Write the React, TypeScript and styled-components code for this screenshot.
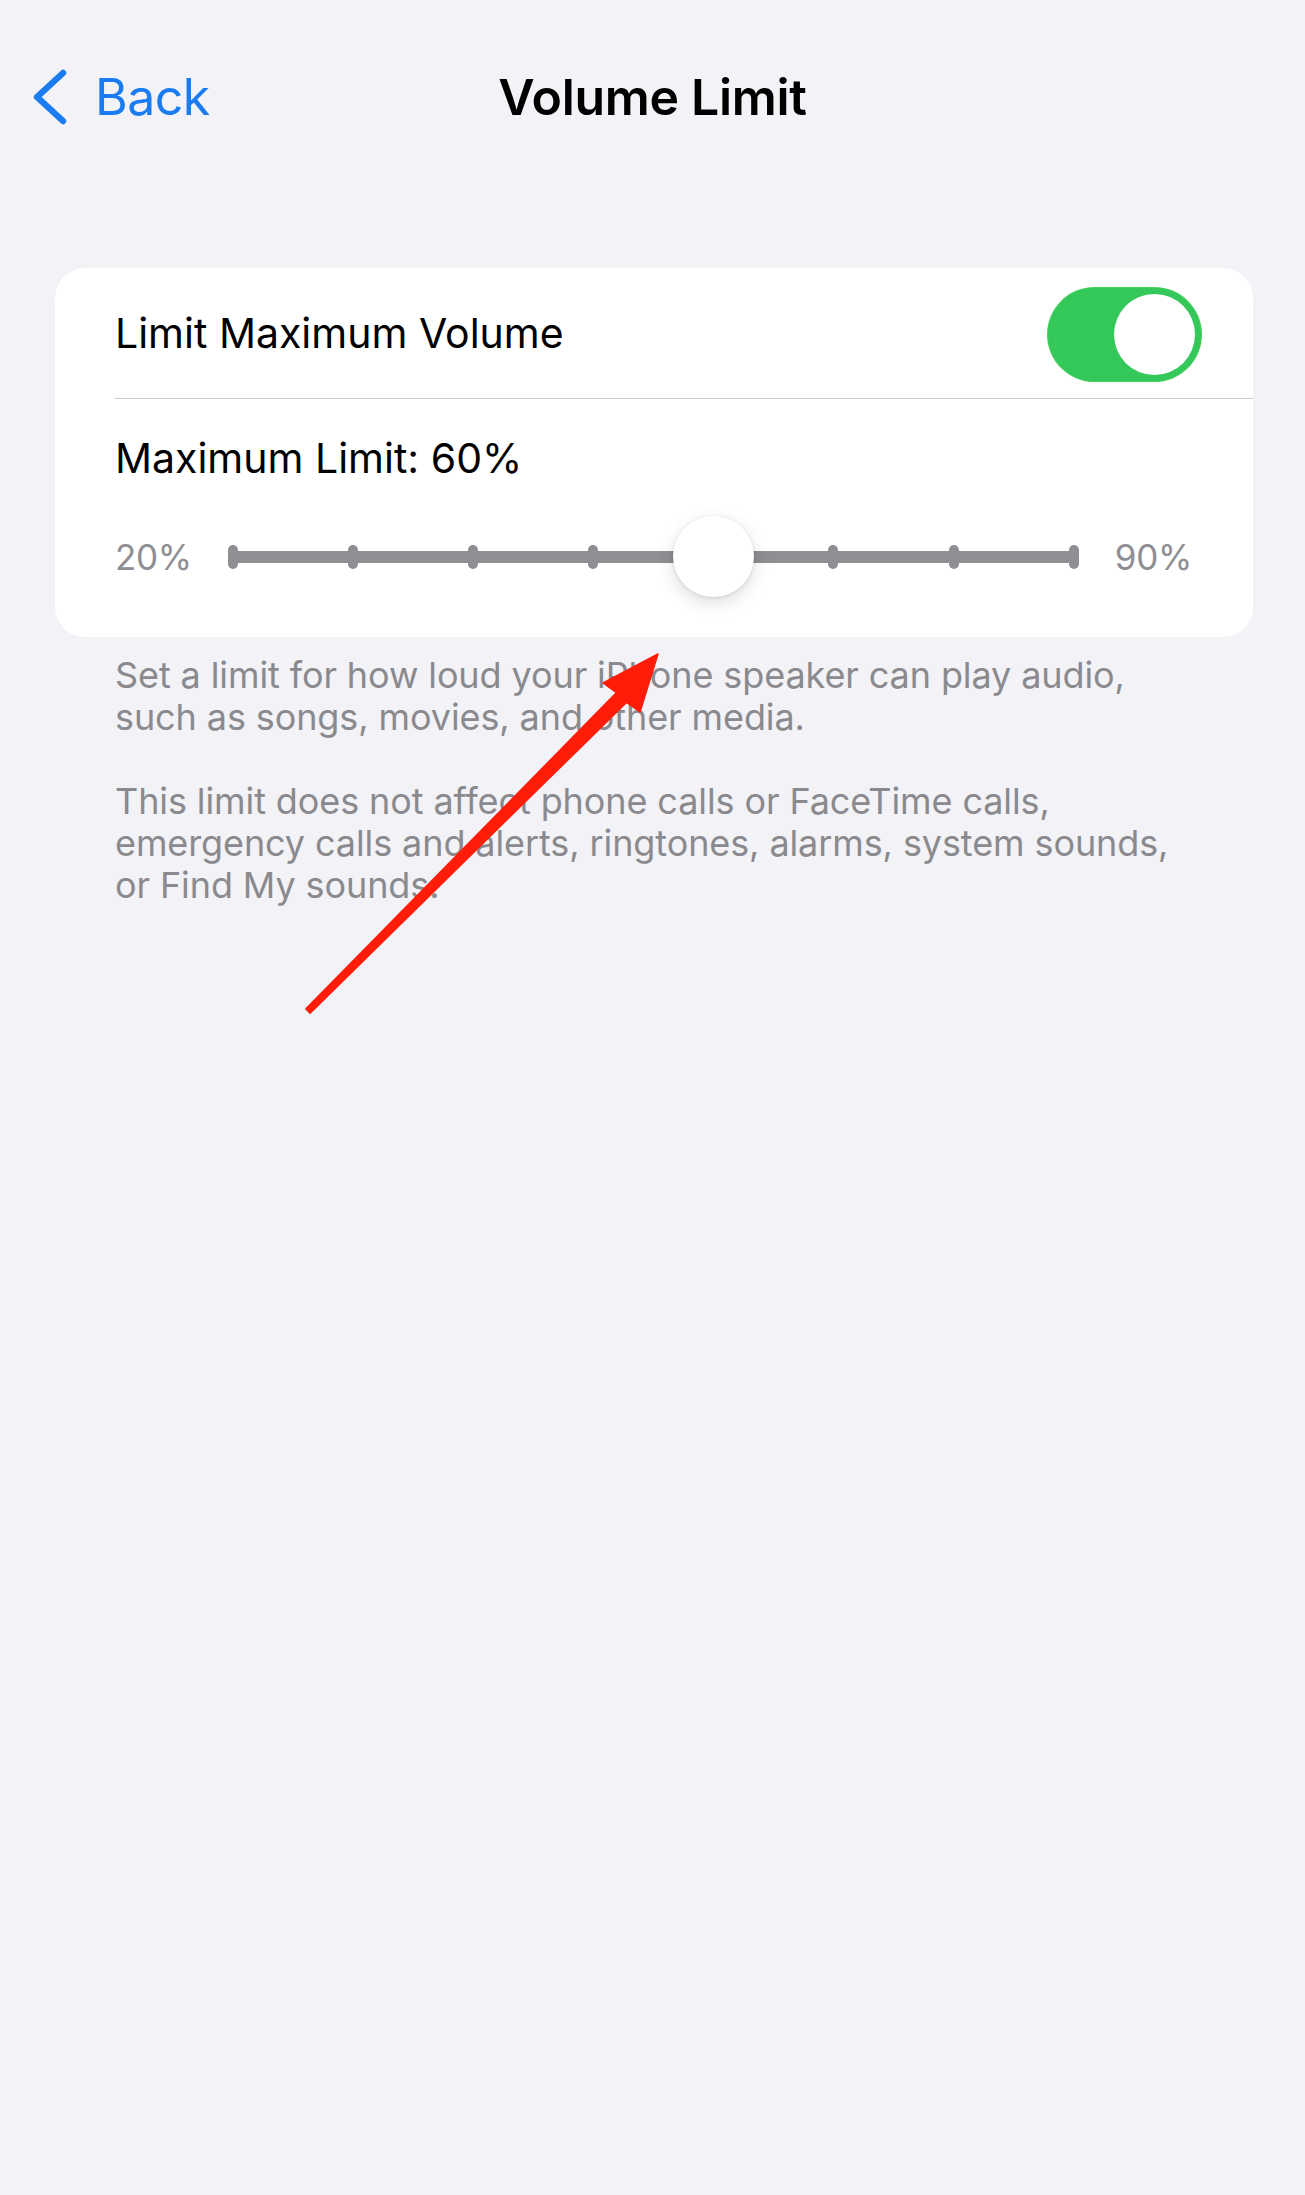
import React from 'react';
import styled, { createGlobalStyle } from 'styled-components';

const GlobalStyle = createGlobalStyle`
  html, body {
    margin: 0;
    padding: 0;
    background: #f2f2f7;
  }
  body {
    font-family: Inter, "Noto Sans", "Liberation Sans", sans-serif;
    -webkit-font-smoothing: antialiased;
  }
`;

const Page = styled.div`
  position: relative;
  min-height: 2195px;
  background: #f2f2f7;
  overflow: hidden;
`;

const NavBar = styled.header`
  display: grid;
  grid-template-columns: 1fr auto 1fr;
  align-items: center;
  height: 74px;
  margin-top: 60px;
  padding: 0 33px;
`;

const BackButton = styled.button`
  display: flex;
  align-items: center;
  gap: 28px;
  justify-self: start;
  border: 0;
  background: none;
  padding: 0;
  color: #1a7cf0;
  font-family: inherit;
  font-size: 50px;
  font-weight: 400;
  letter-spacing: -0.5px;
  cursor: pointer;
`;

const Title = styled.h1`
  margin: 0;
  font-size: 50px;
  font-weight: 600;
  color: #000;
  letter-spacing: -0.3px;
`;

const Card = styled.section`
  margin: 134px 52px 0 55px;
  background: #fff;
  border-radius: 30px;
  overflow: hidden;
`;

const ToggleRow = styled.div`
  padding-left: 60px;
`;

const ToggleRowInner = styled.div`
  display: flex;
  align-items: center;
  justify-content: space-between;
  height: 130px;
  padding-right: 52px;
  border-bottom: 1.5px solid #c8c8cc;
`;

const RowLabel = styled.span`
  font-size: 41px;
  line-height: 50px;
  color: #000;
`;

const Switch = styled.div<{ $on: boolean }>`
  display: flex;
  justify-content: ${(p) => (p.$on ? 'flex-end' : 'flex-start')};
  align-items: center;
  box-sizing: border-box;
  width: 153px;
  height: 93px;
  padding: 6px;
  border-radius: 47px;
  background: ${(p) => (p.$on ? '#34c759' : '#e9e9eb')};
  box-shadow: 0 0 0 1px #46d15e;
  margin-top: 2px;
`;

const SwitchKnob = styled.div`
  width: 81px;
  height: 81px;
  border-radius: 50%;
  background: #fff;
`;

const SliderGroup = styled.div`
  padding: 34px 61px 40px 60px;
`;

const SliderTitle = styled.div`
  font-size: 41px;
  line-height: 50px;
  color: #000;
`;

const SliderRow = styled.div`
  display: flex;
  align-items: center;
  height: 81px;
  margin-top: 33px;
`;

const EndLabel = styled.span`
  font-size: 35px;
  color: #8e8e93;
  letter-spacing: -0.3px;
`;

const Track = styled.div`
  position: relative;
  flex: 1;
  height: 12px;
  margin: 0 36px 0 36px;
  border-radius: 6px;
  background: #8e8e93;
`;

const Tick = styled.span`
  position: absolute;
  top: 50%;
  width: 10px;
  height: 24px;
  margin: -12px 0 0 -5px;
  border-radius: 5px;
  background: #8e8e93;
`;

const Thumb = styled.span`
  position: absolute;
  top: 50%;
  width: 81px;
  height: 81px;
  margin: -41px 0 0 -40.5px;
  border-radius: 50%;
  background: #fff;
  box-shadow: 0 6px 18px rgba(0, 0, 0, 0.13), 0 1px 4px rgba(0, 0, 0, 0.1);
`;

const Footer = styled.div`
  margin: 17px 20px 0 115px;
  font-size: 36px;
  line-height: 42px;
  color: #8a8a8e;
  letter-spacing: -0.1px;
`;

const FooterParagraph = styled.p`
  margin: 0 0 42px;
  white-space: nowrap;
`;

const ArrowOverlay = styled.svg`
  position: absolute;
  left: 290px;
  top: 640px;
  width: 390px;
  height: 390px;
  pointer-events: none;
`;

const steps = [20, 30, 40, 50, 60, 70, 80, 90];
const value = 60;

function StepSlider() {
  const idx = steps.indexOf(value);
  const pos = (i: number) => `calc(5px + (100% - 10px) * ${i / (steps.length - 1)})`;
  return (
    <SliderRow>
      <EndLabel>20%</EndLabel>
      <Track>
        {steps.map((s, i) => (
          <Tick key={s} style={{ left: pos(i) }} />
        ))}
        <Thumb style={{ left: pos(idx) }} />
      </Track>
      <EndLabel>90%</EndLabel>
    </SliderRow>
  );
}

export default function App() {
  return (
    <Page>
      <GlobalStyle />
      <NavBar>
        <BackButton>
          <svg width="34" height="56" viewBox="0 0 34 56" fill="none">
            <path d="M30 4 L4 28 L30 52" stroke="#1a7cf0" strokeWidth="6.4" strokeLinecap="round" strokeLinejoin="round" />
          </svg>
          Back
        </BackButton>
        <Title>Volume Limit</Title>
        <span />
      </NavBar>

      <Card>
        <ToggleRow>
          <ToggleRowInner>
            <RowLabel>Limit Maximum Volume</RowLabel>
            <Switch $on>
              <SwitchKnob />
            </Switch>
          </ToggleRowInner>
        </ToggleRow>
        <SliderGroup>
          <SliderTitle>Maximum Limit: {value}%</SliderTitle>
          <StepSlider />
        </SliderGroup>
      </Card>

      <Footer>
        <FooterParagraph>
          Set a limit for how loud your iPhone speaker can play audio,
          <br />
          such as songs, movies, and other media.
        </FooterParagraph>
        <FooterParagraph>
          This limit does not affect phone calls or FaceTime calls,
          <br />
          emergency calls and alerts, ringtones, alarms, system sounds,
          <br />
          or Find My sounds.
        </FooterParagraph>
      </Footer>

      <ArrowOverlay viewBox="0 0 390 390">
        <polygon
          points="368,14 350,72 336.5,62.4 20.1,373.1 15.9,368.9 326.5,52.6 313,43"
          fill="#ff1d0a"
          stroke="#ff1d0a"
          strokeWidth="1.5"
          strokeLinejoin="round"
        />
      </ArrowOverlay>
    </Page>
  );
}
